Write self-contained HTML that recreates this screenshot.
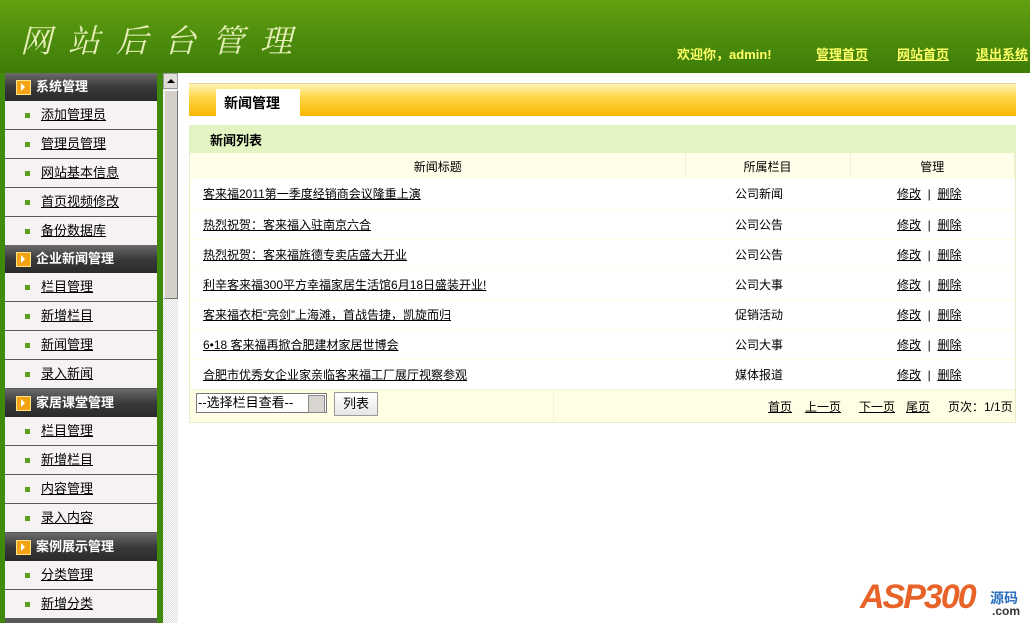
<!DOCTYPE html>
<html><head><meta charset="utf-8"><style>
*{margin:0;padding:0;box-sizing:border-box}
body{width:1030px;height:623px;overflow:hidden;background:#fff;font-family:"Liberation Sans","Noto Sans CJK SC",sans-serif;font-size:12px;color:#000;position:relative}
.hd{position:absolute;left:0;top:0;width:1030px;height:73px;background:linear-gradient(#64a010,#4a8a0c 60%,#3e7d08)}
.logo{position:absolute;left:20px;top:16px;font-family:"Noto Serif CJK SC",serif;font-size:32px;letter-spacing:16px;color:#e6efb8;font-style:italic}
.nav{position:absolute;top:44px;font-size:13px;font-weight:bold;color:#ffff66}
.nav u{color:#ffff66}
.side{position:absolute;left:0;top:73px;width:163px;height:550px;background:#3f8a0a}
.sep{position:absolute;left:5px;top:73px;width:152px;height:550px;background:#5a5a5a}
.g{position:absolute;left:5px;width:152px;height:28px;background:linear-gradient(#6b6b6b,#3a3a3a 50%,#2a2a2a);color:#fff;font-weight:bold;font-size:13px;line-height:27px;padding-left:31px}
.g:before{content:"";position:absolute;left:11px;top:7px;width:13px;height:13px;background:#f5a313;border:1px solid #fde38a}
.g:after{content:"";position:absolute;left:16px;top:10px;border-left:4px solid #fff;border-top:4px solid transparent;border-bottom:4px solid transparent}
.it{position:absolute;left:5px;width:152px;height:28px;background:#f6f2f4;line-height:27px;padding-left:36px;font-size:13px}
.it u{color:#000}
.it:before{content:"";position:absolute;left:20px;top:12px;width:5px;height:5px;background:#5aa020}
.sb{position:absolute;left:163px;top:73px;width:15px;height:550px;background:repeating-conic-gradient(#ddd 0 25%,#fff 0 50%) 0 0/2px 2px}
.sbu{position:absolute;left:163px;top:73px;width:15px;height:16px;background:#e0ddd8;border:1px solid #999}
.sbu:after{content:"";position:absolute;left:3px;top:5px;border-bottom:4px solid #000;border-left:4px solid transparent;border-right:4px solid transparent}
.thumb{position:absolute;left:164px;top:90px;width:14px;height:209px;background:#d4d0c8;border:1px solid #777;border-top-color:#fff;border-left-color:#eee}
.bar{position:absolute;left:189px;top:83px;width:827px;height:33px;background:linear-gradient(#fff3b8,#ffd84a 40%,#f8b600);border-top:1px solid #e8d48a}
.tab{position:absolute;left:216px;top:89px;width:84px;height:27px;background:#fff;font-weight:bold;font-size:14px;padding:4px 0 0 8px}
.box{position:absolute;left:189px;top:125px;width:827px;height:298px;background:#fffeea;border:1px solid #e4efc8}
.bh{position:absolute;left:190px;top:126px;width:825px;height:27px;background:#e4f5c4;font-weight:bold;font-size:13px;padding:4px 0 0 20px}
table{position:absolute;left:191px;top:153px;width:824px;border-collapse:collapse;font-size:12px}
td{height:30px}
tr.h td{height:26px;text-align:center;border-right:1px solid #f0efd8;background:#fffee8}
tr.r td{background:#fff;border-bottom:1px solid #fffde8}
td.t{padding-left:12px}
.foot{position:absolute;left:190px;top:389px;width:825px;height:33px;background:#fffee4;border-top:1px solid #eef4d4}
.sel{position:absolute;left:196px;top:393px;width:131px;height:20px;border:1px solid #777;background:#fff;font-size:13px;line-height:18px;padding-left:1px}
.sel:after{content:"";position:absolute;right:1px;top:1px;width:15px;height:16px;background:#d8d5d0;border:1px solid #888}
.btn{position:absolute;left:334px;top:392px;width:44px;height:24px;border:1px solid #999;background:linear-gradient(#fff,#e6e6e6);font-size:13px;text-align:center;line-height:22px}
.pg{position:absolute;top:398px;font-size:12px}
.asp{position:absolute;left:860px;top:578px;font:italic bold 34px "Liberation Sans",sans-serif;color:#e8632a;letter-spacing:-2px}
.ym{position:absolute;left:990px;top:588px;font:bold 14px "Noto Sans CJK SC",sans-serif;color:#2a6fc0}
.com{position:absolute;left:992px;top:604px;font:bold 12px "Liberation Sans",sans-serif;color:#333}
</style></head><body>
<div class="hd"><div class="logo">网站后台管理</div>
<div class="nav" style="left:677px">欢迎你，admin!</div>
<div class="nav" style="left:816px"><u>管理首页</u></div>
<div class="nav" style="left:897px"><u>网站首页</u></div>
<div class="nav" style="left:976px"><u>退出系统</u></div></div>
<div class="side"></div><div class="sep"></div>
<div class="g" style="top:73px">系统管理</div>
<div class="it" style="top:101px"><u>添加管理员</u></div>
<div class="it" style="top:130px"><u>管理员管理</u></div>
<div class="it" style="top:159px"><u>网站基本信息</u></div>
<div class="it" style="top:188px"><u>首页视频修改</u></div>
<div class="it" style="top:217px"><u>备份数据库</u></div>
<div class="g" style="top:245px">企业新闻管理</div>
<div class="it" style="top:273px"><u>栏目管理</u></div>
<div class="it" style="top:302px"><u>新增栏目</u></div>
<div class="it" style="top:331px"><u>新闻管理</u></div>
<div class="it" style="top:360px"><u>录入新闻</u></div>
<div class="g" style="top:389px">家居课堂管理</div>
<div class="it" style="top:417px"><u>栏目管理</u></div>
<div class="it" style="top:446px"><u>新增栏目</u></div>
<div class="it" style="top:475px"><u>内容管理</u></div>
<div class="it" style="top:504px"><u>录入内容</u></div>
<div class="g" style="top:533px">案例展示管理</div>
<div class="it" style="top:561px"><u>分类管理</u></div>
<div class="it" style="top:590px"><u>新增分类</u></div>
<div class="sb"></div><div class="sbu"></div><div class="thumb"></div>
<div class="bar"></div><div class="tab">新闻管理</div>
<div class="box"></div><div class="bh">新闻列表</div>
<table>
<tr class="h"><td style="width:494px">新闻标题</td><td style="width:165px">所属栏目</td><td>管理</td></tr>
<tr class="r"><td class="t"><u>客来福2011第一季度经销商会议隆重上演</u></td><td style="padding-left:50px">公司新闻</td><td style="padding-left:47px"><u>修改</u> &nbsp;| &nbsp;<u>删除</u></td></tr>
<tr class="r"><td class="t"><u>热烈祝贺：客来福入驻南京六合</u></td><td style="padding-left:50px">公司公告</td><td style="padding-left:47px"><u>修改</u> &nbsp;| &nbsp;<u>删除</u></td></tr>
<tr class="r"><td class="t"><u>热烈祝贺：客来福旌德专卖店盛大开业</u></td><td style="padding-left:50px">公司公告</td><td style="padding-left:47px"><u>修改</u> &nbsp;| &nbsp;<u>删除</u></td></tr>
<tr class="r"><td class="t"><u>利辛客来福300平方幸福家居生活馆6月18日盛装开业!</u></td><td style="padding-left:50px">公司大事</td><td style="padding-left:47px"><u>修改</u> &nbsp;| &nbsp;<u>删除</u></td></tr>
<tr class="r"><td class="t"><u>客来福衣柜“亮剑”上海滩，首战告捷，凯旋而归</u></td><td style="padding-left:50px">促销活动</td><td style="padding-left:47px"><u>修改</u> &nbsp;| &nbsp;<u>删除</u></td></tr>
<tr class="r"><td class="t"><u>6•18 客来福再掀合肥建材家居世博会</u></td><td style="padding-left:50px">公司大事</td><td style="padding-left:47px"><u>修改</u> &nbsp;| &nbsp;<u>删除</u></td></tr>
<tr class="r"><td class="t"><u>合肥市优秀女企业家亲临客来福工厂展厅视察参观</u></td><td style="padding-left:50px">媒体报道</td><td style="padding-left:47px"><u>修改</u> &nbsp;| &nbsp;<u>删除</u></td></tr>
</table>
<div class="foot"></div>
<div style="position:absolute;left:553px;top:390px;width:1px;height:32px;background:#eef4d4"></div>
<div class="sel">--选择栏目查看--</div>
<div class="btn">列表</div>
<div class="pg" style="left:768px"><u>首页</u></div>
<div class="pg" style="left:805px"><u>上一页</u></div>
<div class="pg" style="left:859px"><u>下一页</u></div>
<div class="pg" style="left:906px"><u>尾页</u></div>
<div class="pg" style="left:948px">页次：1/1页</div>
<div class="asp">ASP300</div><div class="ym">源码</div><div class="com">.com</div>
</body></html>
